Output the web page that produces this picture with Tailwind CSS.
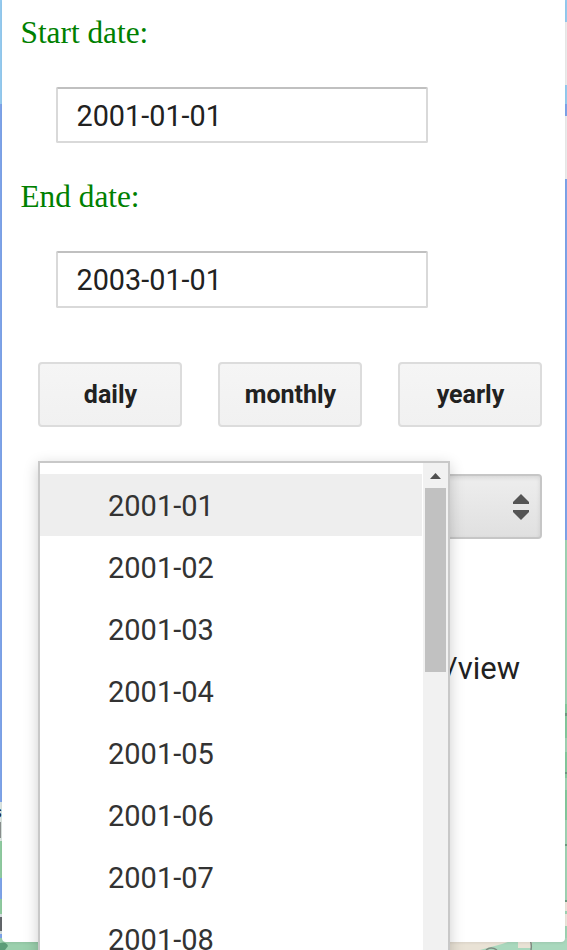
<!DOCTYPE html>
<html lang="en">
<head>
<meta charset="utf-8">
<title>Date range</title>
<script src="https://cdn.jsdelivr.net/npm/@tailwindcss/browser@4"></script>
</head>
<body class="relative w-[567px] h-[950px] overflow-hidden bg-[#7ea4ea] font-['Roboto',sans-serif] text-[#212121]">
  <!-- map behind the panel -->
  <svg class="absolute inset-0" width="567" height="950" viewBox="0 0 567 950" aria-hidden="true">
    <rect width="567" height="104" fill="#95cbf0"/>
    <rect x="560" y="22" width="7" height="63" fill="#ececec"/>
    <rect x="560" y="116" width="7" height="63" fill="#ececec"/>
    <rect x="560" y="540" width="7" height="410" fill="#9fd3b3"/>
    <path d="M560 704h7v34h-7zM560 752h7v26h-7zM560 790h7v30h-7z" fill="#84c99d"/>
    <path d="M560 713h7v3h-7zM560 772h7v2h-7zM560 844h7v2h-7zM560 900h7v2h-7z" fill="#6d9a82"/>
    <path d="M560 902h7v9h-7zM560 914h7v12h-7z" fill="#ebe5da"/>
    <rect y="802" width="8" height="39" fill="#dce6e2"/>
    <rect y="822" width="1" height="16" fill="#8a8f8d"/>
    <path d="M0 841h8v37H0zM0 899h8v15H0z" fill="#8fcba0"/>
    <rect y="914" width="8" height="20" fill="#d5dfdf"/>
    <rect y="917" width="2" height="14" fill="#62666a"/>
    <path d="M0 938h40v12H0z" fill="#9bd0ad"/>
    <path d="M0 943q6-2 8 3l-3 4H0z" fill="#5c9d78"/>
    <path d="M440 938h127v12H440z" fill="#a9d8bd"/>
    <path d="M440 938h80l-18 6-22 6h-40zM518 938h14v10h-14z" fill="#e9e2d5"/>
    <path d="M486 950q5-4 11 0M530 940q2 4 1 10" fill="none" stroke="#7d8b81" stroke-width="1.5"/>
    <text x="-8" y="818" font-size="19" font-weight="700" fill="#222" font-family="Roboto, sans-serif">s</text>
  </svg>

  <main class="relative ml-[2px] w-[563px] h-[942px] rounded-b-[4px] bg-white shadow-[0_1px_3px_rgba(0,0,0,.08)]">
    <label class="block h-[87px] pl-[18.5px] pt-[15px] font-['Liberation_Serif',serif] text-[31.3px] leading-[36px] text-[#008000]">Start date:</label>
    <div class="ml-[54px] flex h-[56px] w-[372px] items-center rounded-[2px] border-2 border-[#d9d9d9] border-t-[#c0c0c0] pl-[18.5px] pt-[2px] text-[28.8px] leading-[34px]">2001-01-01</div>
    <label class="block h-[108px] pl-[18.5px] pt-[36px] font-['Liberation_Serif',serif] text-[31.3px] leading-[36px] text-[#008000]">End date:</label>
    <div class="ml-[54px] flex h-[57px] w-[372px] items-center rounded-[2px] border-2 border-[#d9d9d9] border-t-[#c0c0c0] pl-[18.5px] text-[28.8px] leading-[34px]">2003-01-01</div>

    <div class="mt-[54px] ml-[36px] flex gap-[36px] text-[25px] font-bold">
      <button class="h-[65px] w-[144px] rounded-[4px] border-2 border-[#dcdcdc] bg-linear-to-b from-[#f5f5f5] to-[#f1f1f1] pl-px">daily</button>
      <button class="h-[65px] w-[144px] rounded-[4px] border-2 border-[#dcdcdc] bg-linear-to-b from-[#f5f5f5] to-[#f1f1f1] pl-px">monthly</button>
      <button class="h-[65px] w-[144px] rounded-[4px] border-2 border-[#dcdcdc] bg-linear-to-b from-[#f5f5f5] to-[#f1f1f1] pl-px">yearly</button>
    </div>

    <div class="mt-[47px] ml-[36px] flex h-[65px] w-[504px] items-center justify-end rounded-[4px] border-2 border-[#c6c6c6] bg-linear-to-b from-[#eeeeee] to-[#e0e0e0] pr-[11px] shadow-[inset_0_2px_4px_rgba(0,0,0,.1)]">
      <svg width="16" height="26" viewBox="0 0 16 26" fill="#555" aria-hidden="true"><path d="M8 0L16 8v2H0V8zM0 16h16v2l-8 8-8-8z"/></svg>
    </div>
    <p class="mt-[110px] pr-[45px] text-right text-[31px] leading-[40px]">/view</p>
  </main>

  <!-- open month list -->
  <div class="absolute left-[38px] top-[461px] flex h-[520px] w-[412px] border-2 border-[#c8c8c8] bg-white shadow-[0_4px_14px_rgba(0,0,0,.2)]">
    <ul class="w-[382px] pt-[11px] text-[29px] leading-[64px] text-[#333]">
      <li class="h-[62px] bg-[#eeeeee] pl-[68px]">2001-01</li>
      <li class="h-[62px] pl-[68px]">2001-02</li>
      <li class="h-[62px] pl-[68px]">2001-03</li>
      <li class="h-[62px] pl-[68px]">2001-04</li>
      <li class="h-[62px] pl-[68px]">2001-05</li>
      <li class="h-[62px] pl-[68px]">2001-06</li>
      <li class="h-[62px] pl-[68px]">2001-07</li>
      <li class="h-[62px] pl-[68px]">2001-08</li>
    </ul>
    <div class="ml-[1px] w-[25px] bg-[#f1f1f1] pl-[2px] pt-[10px]">
      <svg class="ml-[5px]" width="11" height="6" viewBox="0 0 11 6" fill="#505050" aria-hidden="true"><path d="M5.5 0L11 6H0z"/></svg>
      <div class="mt-[9px] h-[184px] w-[21px] bg-[#c1c1c1]"></div>
    </div>
  </div>
</body>
</html>
